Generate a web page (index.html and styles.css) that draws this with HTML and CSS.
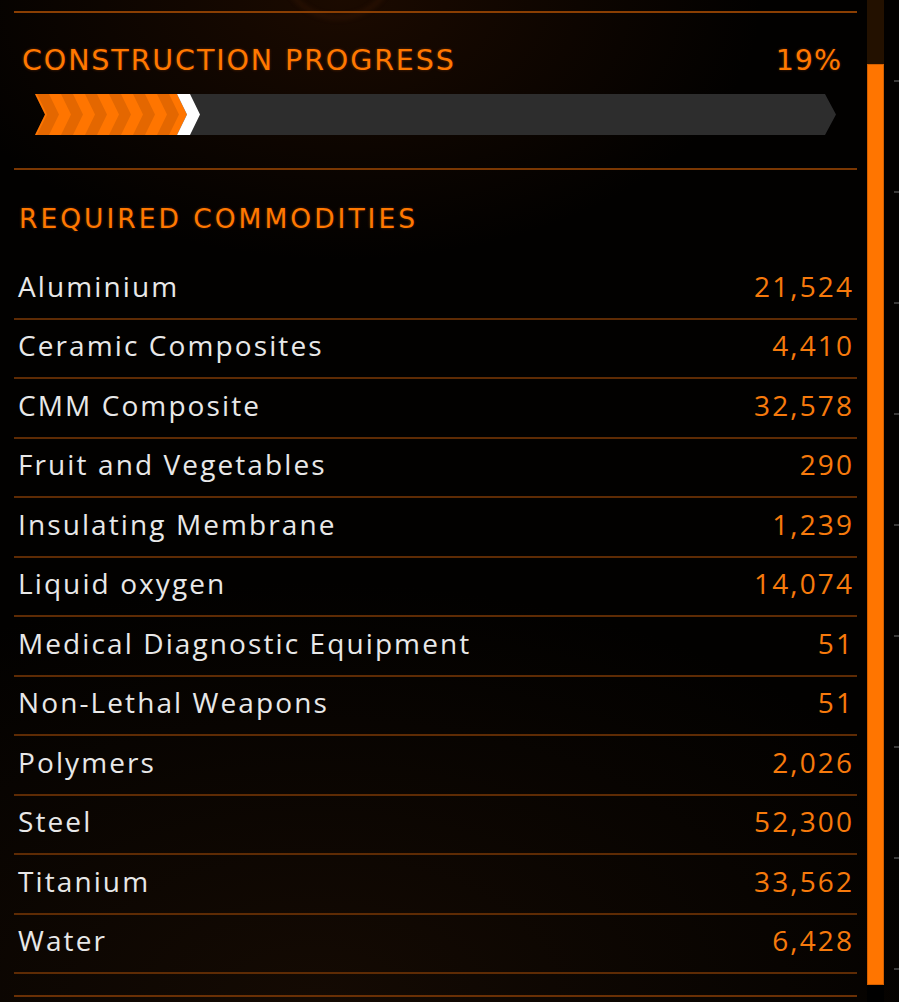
FILE: index.html
```html
<!DOCTYPE html>
<html lang="en">
<head>
<meta charset="utf-8">
<title>Construction Progress</title>
<link rel="stylesheet" href="styles.css">
</head>
<body>
<div class="page">
  <div class="ring"></div>
  <main class="panel">
    <div class="rule rule-top"></div>
    <div class="progress-head">
      <span class="title">CONSTRUCTION PROGRESS</span>
      <span class="pct">19%</span>
    </div>
    <div class="bar">
      <svg width="801" height="41" viewBox="0 0 801 41" aria-hidden="true">
        <defs>
          <pattern id="stripes" x="0" y="0" width="24" height="41" patternUnits="userSpaceOnUse">
            <rect width="24" height="41" fill="#ff7500"/>
            <polygon points="2,0 14,0 24,20.5 14,41 2,41 12,20.5" fill="#e46700"/>
          </pattern>
        </defs>
        <polygon points="0,0 790,0 801,20.5 790,41 0,41 10,20.5" fill="#2d2d2d"/>
        <polygon points="0,0 142,0 152,20.5 142,41 0,41 10,20.5" fill="url(#stripes)"/>
        <polygon points="142,0 155,0 165,20.5 155,41 142,41 152,20.5" fill="#ffffff"/>
      </svg>
    </div>
    <div class="rule rule-mid"></div>
    <h2 class="section">REQUIRED COMMODITIES</h2>
    <ul class="list">
      <li class="row"><span class="name">Aluminium</span><span class="qty">21,524</span></li>
      <li class="row"><span class="name">Ceramic Composites</span><span class="qty">4,410</span></li>
      <li class="row"><span class="name">CMM Composite</span><span class="qty">32,578</span></li>
      <li class="row"><span class="name">Fruit and Vegetables</span><span class="qty">290</span></li>
      <li class="row"><span class="name">Insulating Membrane</span><span class="qty">1,239</span></li>
      <li class="row"><span class="name">Liquid oxygen</span><span class="qty">14,074</span></li>
      <li class="row"><span class="name">Medical Diagnostic Equipment</span><span class="qty">51</span></li>
      <li class="row"><span class="name">Non-Lethal Weapons</span><span class="qty">51</span></li>
      <li class="row"><span class="name">Polymers</span><span class="qty">2,026</span></li>
      <li class="row"><span class="name">Steel</span><span class="qty">52,300</span></li>
      <li class="row"><span class="name">Titanium</span><span class="qty">33,562</span></li>
      <li class="row"><span class="name">Water</span><span class="qty">6,428</span></li>
    </ul>
    <div class="rule rule-bottom"></div>
  </main>
  <div class="scroll">
    <div class="thumb"></div>
  </div>
  <div class="ticks">
    <i></i><i></i><i></i><i></i><i></i><i></i><i></i><i></i><i></i>
  </div>
</div>
</body>
</html>
```
FILE: styles.css
```css
* { box-sizing: border-box; }
html, body { margin: 0; padding: 0; }
body {
  width: 899px;
  height: 1002px;
  overflow: hidden;
  background:
    radial-gradient(ellipse 420px 260px at 38% 0%, rgba(48, 18, 0, 0.55), rgba(0,0,0,0) 100%),
    radial-gradient(ellipse 700px 420px at 35% 100%, rgba(28, 14, 4, 0.7), rgba(0,0,0,0) 100%),
    #020100;
  font-family: "Open Sans", "Noto Sans", sans-serif;
}
.page {
  position: relative;
  display: flex;
  height: 1002px;
  padding-left: 14px;
}
.ring {
  position: absolute;
  left: 278px;
  top: -100px;
  width: 120px;
  height: 120px;
  border-radius: 50%;
  border: 5px solid rgba(70, 30, 5, 0.3);
  filter: blur(2px);
  pointer-events: none;
}
.panel {
  width: 843px;
  padding-top: 11px;
  position: relative;
}
.rule { height: 2px; background: #8a3e02; }
.rule-mid { margin-top: 33px; background: #7a3702; }
.rule-bottom { margin-top: 21px; background: #6a3005; }
.progress-head {
  display: flex;
  justify-content: space-between;
  align-items: baseline;
  padding: 0 15px 0 8px;
  margin-top: 32px;
  height: 31px;
  line-height: 32px;
  font-family: "DejaVu Sans", sans-serif;
  font-size: 28.5px;
  color: #ff7800;
  text-shadow: 0 0 3px rgba(255, 110, 0, 0.35);
}
.title { letter-spacing: 1.9px; }
.pct { letter-spacing: 1px; }
.bar {
  margin-top: 18px;
  padding-left: 21px;
  height: 41px;
}
.bar svg { display: block; }
.section {
  margin: 33px 0 0 5px;
  height: 57px;
  font-family: "DejaVu Sans", sans-serif;
  font-weight: normal;
  font-size: 26.5px;
  line-height: 32px;
  letter-spacing: 3px;
  color: #ff7800;
  text-shadow: 0 0 3px rgba(255, 110, 0, 0.35);
}
.list { list-style: none; margin: 0; padding: 0; }
.row {
  display: flex;
  justify-content: space-between;
  align-items: center;
  height: 59.5px;
  border-bottom: 2px solid #5e2b04;
  padding: 0 5px 6px 4px;
  font-size: 28px;
  line-height: 32px;
  letter-spacing: 2.1px;
}
.name { color: #e8e8e8; }
.qty { color: #f77a0c; margin-right: -2px; }
.scroll {
  margin-left: 10px;
  width: 17px;
  height: 1002px;
  position: relative;
  background: linear-gradient(#231100 0, #231100 64px, #000 64px);
}
.thumb {
  position: absolute;
  left: 0;
  top: 64px;
  width: 17px;
  height: 921px;
  background: #ff7500;
  box-shadow: inset 0 0 0 1px #d35f00;
}
.ticks {
  flex: 1;
  display: flex;
  flex-direction: column;
  align-items: flex-end;
  padding-top: 80px;
  gap: 109px;
}
.ticks i {
  display: block;
  width: 5px;
  height: 2px;
  background: #3a3a3a;
}
```
